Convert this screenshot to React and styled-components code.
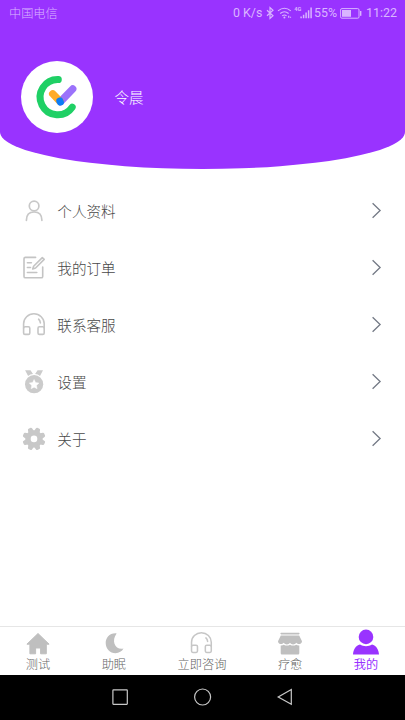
import React, { useState } from 'react';
import styled, { createGlobalStyle, css } from 'styled-components';


const PersonIcon = () => (
    <svg width="24" height="25" viewBox="0 0 24 25" fill="none" stroke="#c8c8c8" strokeWidth="1.7" strokeLinecap="round">
        <circle cx="12.1" cy="8" r="4.8" />
        <path d="M4.4 22.3 C4.4 16.8 7.5 14 12.1 14 C16.7 14 19.9 16.8 19.9 22.3" />
    </svg>
);

const OrderIcon = () => (
    <svg width="24" height="25" viewBox="0 0 24 25" fill="none" stroke="#c4c4c4" strokeWidth="1.6" strokeLinecap="round" strokeLinejoin="round">
        <path d="M13.6 2.4 H3.4 Q2 2.4 2 3.8 V21.4 Q2 22.8 3.4 22.8 H19.3 Q20.7 22.8 20.7 21.4 V12" />
        <path d="M5.4 7.7 H9.4 M5.4 12.5 H8.5 M5.4 17.5 H14.8" />
        <path d="M20.3 2.6 L22.2 4.4 L13.6 13 L10.7 13.9 L11.6 11.2 Z" />
    </svg>
);

const HeadsetIcon = ({ size = 24 }) => (
    <svg width={size} height={size * 25 / 24} viewBox="0 0 24 25" fill="none" stroke="#c6c6c6" strokeWidth="1.6" strokeLinecap="round" strokeLinejoin="round">
        <path d="M1.6 16 V11.7 A10.2 9.8 0 0 1 22.2 11.7 V16" />
        <rect x="1.6" y="14.8" width="6.2" height="7.6" rx="1.4" />
        <rect x="16" y="14.8" width="6.2" height="7.6" rx="1.4" />
        <path d="M16.6 7.2 C17.6 8.1 18.2 9.3 18.4 10.9" />
    </svg>
);

const MedalIcon = () => (
    <svg width="24" height="25" viewBox="0 0 24 25" fill="#cbcbcb">
        <path d="M3.1 1.2 H8.5 L11 5.1 C9 5.3 7.5 5.9 6.1 7 Z" />
        <path d="M21 1.2 H15.6 L13.1 5.1 C15.1 5.3 16.6 5.9 18 7 Z" />
        <circle cx="12.1" cy="15.2" r="9.1" />
        <path fill="#fff" stroke="#fff" strokeWidth=".4" strokeLinejoin="round" d="M12.1 10.4 L13.6 13.6 L17 14 L14.5 16.4 L15.1 19.8 L12.1 18.2 L9.1 19.8 L9.7 16.4 L7.2 14 L10.6 13.6 Z" />
    </svg>
);

const GearIcon = () => (
    <svg width="24" height="25" viewBox="0 0 24 25">
        <g fill="#c8c8c8">
            <circle cx="12" cy="12.9" r="8.6" />
            {[22.5, 67.5, 112.5, 157.5, 202.5, 247.5, 292.5, 337.5].map(angle => (
                <path
                    key={angle}
                    transform={`rotate(${angle} 12 12.9)`}
                    d="M8.8 6.5 L9.8 2.4 Q10 1.5 10.9 1.4 H13.1 Q14 1.5 14.2 2.4 L15.2 6.5 Z"
                />
            ))}
        </g>
        <circle cx="12" cy="12.9" r="3.3" fill="#fff" />
    </svg>
);

const HomeIcon = () => (
    <svg width="26" height="24" viewBox="0 0 26 24" fill="#bfbfbf">
        <path stroke="#bfbfbf" strokeWidth="1" strokeLinejoin="round" d="M13 2.5 L24.1 13.2 H21.3 V22.8 H15.6 V17 H10.6 V22.8 H4.9 V13.2 H1.9 Z" />
    </svg>
);

const MoonIcon = () => (
    <svg width="26" height="24" viewBox="0 0 26 24" fill="#bfbfbf">
        <path d="M15.6 2.4 C8.5 1.8 4.7 7 4.7 12 C4.7 17.8 9 22.2 14.5 22.2 C18 22.2 21 20.4 22.5 17.6 C14 19.2 10 10 15.6 2.4 Z" />
    </svg>
);

const ShopIcon = () => (
    <svg width="26" height="24" viewBox="0 0 26 24" fill="#bfbfbf">
        <rect x="3.4" y="1.8" width="19.2" height="1.6" rx=".8" />
        <path d="M3.8 4.5 H22.2 L25 10.3 C24.9 13.4 21 14 19.3 11.8 C17.6 14 14.6 14 13 11.8 C11.4 14 8.4 14 6.7 11.8 C5 14 1.1 13.4 1 10.3 Z" />
        <path d="M3.7 14.5 Q5.4 14.7 6.8 13.7 Q9.8 15.5 13 13.7 Q16.2 15.5 19.2 13.7 Q20.6 14.7 22.3 14.5 V22.2 Q22.3 23.4 21.1 23.4 H4.9 Q3.7 23.4 3.7 22.2 Z" />
    </svg>
);

const UserIcon = () => (
    <svg width="26" height="26" viewBox="0 0 26 26" fill="#9933ff">
        <circle cx="13" cy="7.9" r="7.3" />
        <path d="M0 25.6 C.3 20.5 2.8 16.8 7 15.6 C10.6 17.9 15.4 17.9 19 15.6 C23.2 16.8 25.7 20.5 26 25.6 Z" />
    </svg>
);

const Logo = () => (
    <svg width="72" height="72" viewBox="0 0 72 72" fill="none" strokeLinecap="round">
        <path stroke="#1fd065" strokeWidth="7" d="M37.3 18.6 A17.6 17.6 0 1 0 51.2 46.2" />
        <path stroke="#9b72fb" strokeWidth="7.4" d="M39.5 40.6 L51.7 28" />
        <path stroke="#ffab2a" strokeWidth="7.4" d="M31.7 32.8 L39 40.4" />
        <path stroke="#0a7cf8" strokeWidth="7.2" d="M38.9 40 L39.3 41" />
    </svg>
);

const StatusIcons = () => (
    <svg width="48" height="16" viewBox="0 0 48 16" fill="none" stroke="currentColor" strokeWidth="1.2">
        <path d="M2 5.2 L8 10.8 L5 13.5 V2.5 L8 5.2 L2 10.8" />
        <path d="M13 5.9 Q19.4 .6 25.8 5.9 M15.2 8.5 Q19.4 5 23.6 8.5 M17.2 10.9 Q19.4 9.1 21.6 10.9" />
        <circle cx="19.4" cy="12.6" r="1" fill="currentColor" stroke="none" />
        <path d="M23.7 12.7 V10.8 M25.5 12.7 V11.8" />
        <text x="29.2" y="6.4" fill="currentColor" stroke="none" fontSize="5.6" fontWeight="700" fontFamily="Roboto, sans-serif">4G</text>
        <path strokeWidth="1.5" d="M36.1 13.2 V11.5 M38.6 13.2 V9.8 M41.1 13.2 V7.6 M43.6 13.2 V5.2 M46.1 13.2 V2.6" />
    </svg>
);

const BatteryIcon = () => (
    <svg width="22" height="11" viewBox="0 0 22 11">
        <rect x=".6" y=".6" width="18.4" height="9.6" rx="1.3" fill="none" stroke="currentColor" />
        <rect x="2" y="2" width="9" height="6.8" fill="currentColor" />
        <rect x="20" y="3" width="1.4" height="4.8" fill="currentColor" />
    </svg>
);


const menus = [
    { title: '个人资料', icon: <PersonIcon /> },
    { title: '我的订单', icon: <OrderIcon /> },
    { title: '联系客服', icon: <HeadsetIcon /> },
    { title: '设置', icon: <MedalIcon /> },
    { title: '关于', icon: <GearIcon /> },
];

const tabs = [
    { title: '测试', icon: <HomeIcon /> },
    { title: '助眠', icon: <MoonIcon /> },
    { title: '立即咨询', icon: <HeadsetIcon size={23} /> },
    { title: '疗愈', icon: <ShopIcon /> },
    { title: '我的', icon: <UserIcon /> },
];

function App() {
    const [active, setActive] = useState('我的');

    return (
        <Screen>
            <GlobalStyle />
            <Header>
                <StatusBar>
                    <Carrier>中国电信</Carrier>
                    <Speed>0 K/s</Speed>
                    <StatusIcons />
                    <Percent>55%</Percent>
                    <BatteryIcon />
                    <Clock>11:22</Clock>
                </StatusBar>
                <Profile>
                    <Avatar><Logo /></Avatar>
                    <UserName>令晨</UserName>
                </Profile>
            </Header>
            <MenuList>
                {menus.map(({ title, icon }) => (
                    <MenuItem key={title}>
                        {icon}
                        <MenuTitle>{title}</MenuTitle>
                        <svg width="10" height="17" viewBox="0 0 10 17" fill="none" stroke="#737985" strokeWidth="1.3">
                            <path d="M.6 1.2 L8.1 8.5 L.6 15.8" />
                        </svg>
                    </MenuItem>
                ))}
            </MenuList>
            <TabBar>
                {tabs.map(({ title, icon }) => (
                    <Tab key={title} $active={title === active} onClick={() => setActive(title)}>
                        <TabIcon>{icon}</TabIcon>
                        {title}
                    </Tab>
                ))}
            </TabBar>
            <SystemBar>
                <svg width="18" height="18" viewBox="0 0 18 18"><rect x="1.9" y="1.9" width="14.4" height="14.4" rx=".5" /></svg>
                <svg width="18" height="18" viewBox="0 0 18 18"><circle cx="8.6" cy="9" r="8" /></svg>
                <svg width="18" height="18" viewBox="0 0 18 18"><path d="M15.3 1.5 V16.3 L2.2 9 Z" /></svg>
            </SystemBar>
        </Screen>
    );
}


export default App;

const GlobalStyle = createGlobalStyle`
    * {
        box-sizing: border-box;
    }

    body {
        margin: 0;
        background: #fff;
        font-family: Roboto, "Noto Sans CJK SC", sans-serif;
    }

    svg {
        display: block;
        flex-shrink: 0;
    }

    button {
        border: 0;
        padding: 0;
        background: none;
        font: inherit;
    }
`;

const Screen = styled.div`
    display: flex;
    flex-direction: column;
    height: 720px;
    overflow: hidden;
`;

const Header = styled.header`
    height: 169px;
    flex-shrink: 0;
    color: #fff;
    background: #9933ff;
    border-radius: 0 0 50% 50% / 0 0 37px 37px;
`;

const StatusBar = styled.div`
    display: flex;
    align-items: center;
    height: 26px;
    padding: 0 8px 0 9px;
    color: #d9b5ff;
    font-size: 12px;
    line-height: 16px;
`;

const Carrier = styled.span`
    flex: 1;
    padding-top: 2px;
    font-size: 12.2px;
    font-weight: 300;
`;

const Speed = styled.span`
    width: 32px;
    font-size: 12.4px;
    white-space: nowrap;
`;

const Percent = styled.span`
    width: 26px;
    margin-left: 1px;
    font-size: 12.4px;
`;

const Clock = styled.span`
    width: 31px;
    margin-left: 4px;
    font-size: 12.5px;
`;

const Profile = styled.div`
    display: flex;
    align-items: center;
    padding: 35px 0 0 21px;
`;

const Avatar = styled.div`
    width: 72px;
    height: 72px;
    border-radius: 50%;
    background: #fff;
`;

const UserName = styled.span`
    margin-left: 21.5px;
    padding-bottom: 1px;
    font-size: 14.5px;
    font-weight: 300;
`;

const MenuList = styled.main`
    display: flex;
    flex: 1;
    flex-direction: column;
    padding-top: 13px;
`;

const MenuItem = styled.button`
    display: flex;
    align-items: center;
    height: 57px;
    padding: 0 23px 0 22px;
`;

const MenuTitle = styled.span`
    flex: 1;
    margin-left: 11.3px;
    color: #484848;
    font-size: 14.6px;
    font-weight: 300;
    text-align: left;
`;

const TabBar = styled.nav`
    display: flex;
    justify-content: space-around;
    height: 49px;
    flex-shrink: 0;
    padding-right: 1px;
    border-top: 1px solid #e6e6e6;
`;

const Tab = styled.button`
    display: flex;
    flex-direction: column;
    align-items: center;
    color: #646464;
    font-size: 12.2px;
    font-weight: 300;
    line-height: 20px;

    ${props => props.$active && css`
        color: #9933ff;
        font-weight: 400;
    `}
`;

const TabIcon = styled.span`
    display: flex;
    justify-content: center;
    align-items: flex-end;
    width: 24px;
    height: 28px;
`;

const SystemBar = styled.footer`
    display: flex;
    justify-content: center;
    align-items: center;
    gap: 64.5px;
    height: 45px;
    flex-shrink: 0;
    padding-bottom: 1px;
    background: #000;

    svg {
        fill: none;
        stroke: #c8c8c8;
        stroke-width: 1.2;
    }
`;
